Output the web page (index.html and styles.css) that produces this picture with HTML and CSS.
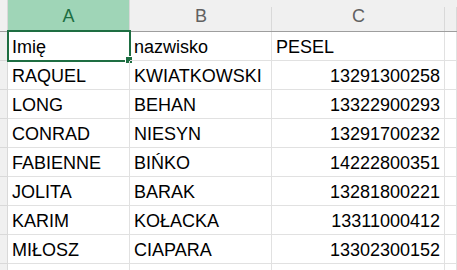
FILE: index.html
```
<!DOCTYPE html>
<html lang="en">
<head>
    <meta charset="UTF-8">
    <title>Arkusz</title>
    <link rel="stylesheet" href="styles.css">
</head>
<body>
    <div class="sheet">
        <div class="head corner"></div>
        <div class="head col active">A</div>
        <div class="head col">B</div>
        <div class="head col">C</div>
        <div class="head col last"></div>

        <div class="rowhead"></div>
        <div class="cell selected">Imię
            <span class="sel-box"><span class="handle"></span></span>
        </div>
        <div class="cell">nazwisko</div>
        <div class="cell">PESEL</div>
        <div class="cell"></div>

        <div class="rowhead"></div>
        <div class="cell">RAQUEL</div>
        <div class="cell">KWIATKOWSKI</div>
        <div class="cell num">13291300258</div>
        <div class="cell"></div>

        <div class="rowhead"></div>
        <div class="cell">LONG</div>
        <div class="cell">BEHAN</div>
        <div class="cell num">13322900293</div>
        <div class="cell"></div>

        <div class="rowhead"></div>
        <div class="cell">CONRAD</div>
        <div class="cell">NIESYN</div>
        <div class="cell num">13291700232</div>
        <div class="cell"></div>

        <div class="rowhead"></div>
        <div class="cell">FABIENNE</div>
        <div class="cell">BIŃKO</div>
        <div class="cell num">14222800351</div>
        <div class="cell"></div>

        <div class="rowhead"></div>
        <div class="cell">JOLITA</div>
        <div class="cell">BARAK</div>
        <div class="cell num">13281800221</div>
        <div class="cell"></div>

        <div class="rowhead"></div>
        <div class="cell">KARIM</div>
        <div class="cell">KOŁACKA</div>
        <div class="cell num">13311000412</div>
        <div class="cell"></div>

        <div class="rowhead"></div>
        <div class="cell">MIŁOSZ</div>
        <div class="cell">CIAPARA</div>
        <div class="cell num">13302300152</div>
        <div class="cell"></div>

        <div class="rowhead"></div>
        <div class="cell"></div>
        <div class="cell"></div>
        <div class="cell"></div>
        <div class="cell"></div>
    </div>
</body>
</html>
```

FILE: styles.css
```
body {
    margin: 0;
    background: #fff;
    font-family: "Liberation Sans", Arial, sans-serif;
    overflow: hidden;
}

.sheet {
    display: grid;
    grid-template-columns: 8px 122px 142px 173px 1fr;
    grid-template-rows: 32px repeat(9, 29px);
    width: 457px;
    height: 270px;
    overflow: hidden;
}

.head {
    background: #f0f0f0;
    border-bottom: 1px solid #9e9e9e;
    color: #616161;
    font-size: 18px;
    display: flex;
    align-items: center;
    justify-content: center;
    padding-top: 2px;
    box-sizing: border-box;
}

.col {
    background-image: linear-gradient(#d9d9d9, #d9d9d9);
    background-size: 1px calc(100% - 7px);
    background-position: right bottom;
    background-repeat: no-repeat;
}

.corner {
    border-right: 1px solid #d9d9d9;
}

.head.active {
    background-color: #9fd5b7;
    background-image: none;
    border-right: 1px solid #d9d9d9;
    border-bottom: 2px solid #1e6e42;
    color: #1e6e42;
}

.rowhead {
    background: #f0f0f0;
    border-right: 1px solid #d9d9d9;
    border-bottom: 1px solid #d9d9d9;
    box-sizing: border-box;
}

.cell {
    position: relative;
    border-right: 1px solid #e1e1e1;
    border-bottom: 1px solid #e1e1e1;
    box-sizing: border-box;
    font-size: 18px;
    color: #000;
    padding: 4px 4px 0 4px;
    line-height: 22px;
    white-space: nowrap;
}

.num {
    text-align: right;
}

.sel-box {
    position: absolute;
    left: -1px;
    top: -2px;
    right: -2px;
    bottom: -2px;
    border: 2px solid #1e6e42;
}

.handle {
    position: absolute;
    right: -4px;
    bottom: -4px;
    width: 6px;
    height: 6px;
    background: #1e6e42;
    border: 1px solid #fff;
}
```
